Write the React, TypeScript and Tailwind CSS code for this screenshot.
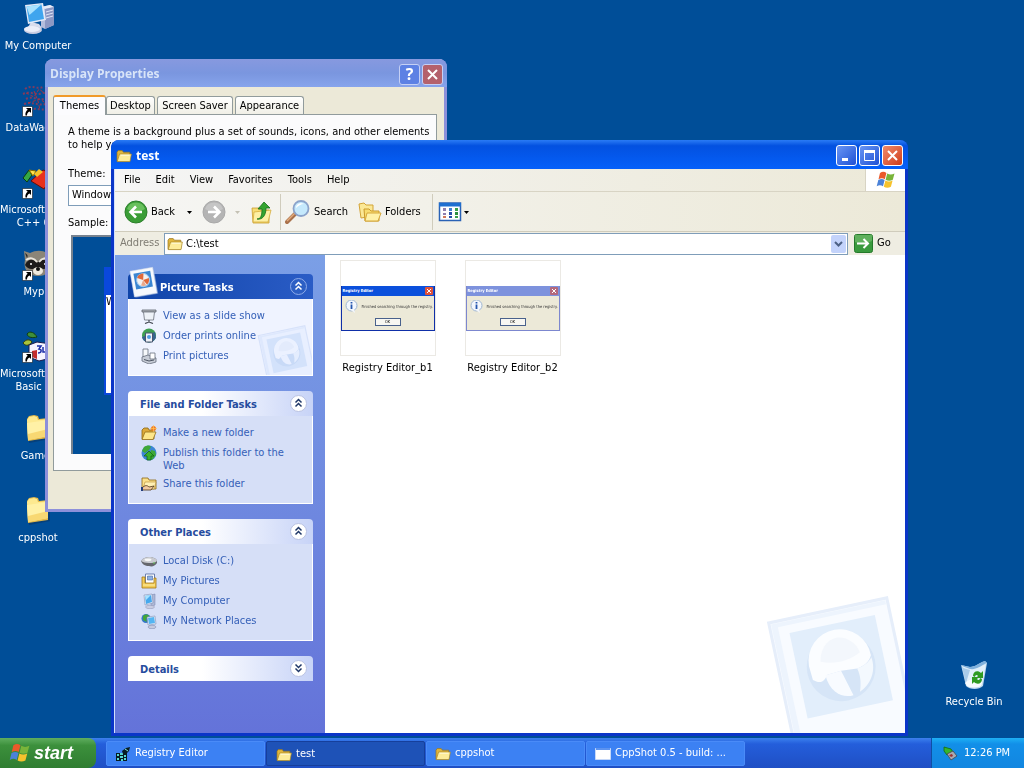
import React, { useState } from 'react';
import clsx from 'clsx';

type IconProps = { size?: number };

const FolderIcon = ({ size = 16 }: IconProps) => (
  <svg width={size} height={size} viewBox="0 0 16 16" className="shrink-0">
    <path d="M1 4.2 2.2 2.6h4l1.2 1.6h6.4v9H1z" fill="#e0b63c" stroke="#96731b" strokeWidth=".7" />
    <path d="M3.6 6h11.8l-1.4 7.6H1.2z" fill="#fdec9a" stroke="#a98628" strokeWidth=".7" />
    <path d="M4.6 7.2h9" stroke="#fffbdc" strokeWidth="1" />
  </svg>
);

const BigFolder = () => (
  <svg width="32" height="32" viewBox="0 0 32 32">
    <path d="M7 8 8 6l3-1 7 1 1 3 9 0v17l-21 4z" fill="#0a2f5c" opacity=".5" />
    <path d="M5 6 7 3l5-1 4 1 1 3 9-1v20L6 28z" fill="#e3b94a" />
    <path d="M5 7 7 4l5-1 3 1 1 3 10-1v17L6 27z" fill="#fde98f" />
    <path d="M5 10 26 7v15L6 26z" fill="#fff1a6" />
    <path d="M6 27 26 23v-7L6 21z" fill="#f8d873" />
  </svg>
);

const WindowsFlag = ({ size = 20 }: IconProps) => (
  <svg width={size} height={size} viewBox="0 0 20 20" className="shrink-0">
    <path d="M4 3c2.400-1.600 4.500-1.400 6.400 0L8.800 9.200c-2-1.300-3.900-1.200-6.300 0z" fill="#ea5a2a" />
    <path d="M11.200 3.500c2.200 1.400 4.800 1.300 7.300 0l-1.700 6.200c-2.300 1.300-5 1.300-7.200 0z" fill="#79b43a" />
    <path d="M2.300 10c2.400-1.300 4.300-1.300 6.300 0L7 16.300c-2-1.300-4-1.300-6.300 0z" fill="#4b82d8" />
    <path d="M9.400 10.500c2.200 1.300 4.900 1.300 7.200 0l-1.700 6.300c-2.300 1.300-4.900 1.300-7.100 0z" fill="#f6c22d" />
  </svg>
);

const ComputerIcon = ({ size = 32 }: IconProps) => (
  <svg width={size} height={size} viewBox="0 0 32 32" className="shrink-0">
    <path d="M19 4 28 2l4 2v18l-9 4-4-2z" fill="#b4bedd" />
    <path d="M19 4 28 2l4 2-9 2z" fill="#e8ecf8" />
    <path d="m23 6 9-2v18l-9 4z" fill="#8c98c4" />
    <path d="m24 9 7-2M24 12l7-2M24 15l7-2" stroke="#dfe5f7" />
    <path d="m9 19 8 2 3 4c-2 4-12 5-15 1z" fill="#d8dcec" />
    <ellipse cx="11" cy="27" rx="9" ry="4" fill="#c9cde2" />
    <ellipse cx="10" cy="26" rx="8" ry="3" fill="#eceef8" />
    <path d="M3 2 21 0l3 17-18 4z" fill="#e4eaf7" />
    <path d="m4.500 3.500 15-2 2.500 14.500L7 19z" fill="#3fa5ee" />
    <path d="m4.500 3.500 15-2L7.500 12z" fill="#a8e2ff" />
  </svg>
);

const SmallComputerIcon = () => (
  <svg width="16" height="16" viewBox="0 0 16 16">
    <path d="m10 2 4-1v11l-4 2z" fill="#aeb8d6" stroke="#7582ab" strokeWidth=".5" />
    <ellipse cx="9" cy="14" rx="4.500" ry="1.700" fill="#c9cde2" stroke="#8a91b3" strokeWidth=".5" />
    <path d="m3 2 8-1 1 9-8 2z" fill="#e3e9f4" stroke="#7182ad" strokeWidth=".5" />
    <path d="m4 3 6-1 1 7-6 2z" fill="#45a8ee" />
    <path d="m4 3 6-1-5 5z" fill="#a8e2ff" />
  </svg>
);

const ShortcutArrow = () => (
  <svg width="11" height="11" viewBox="0 0 11 11" className="absolute bottom-0 left-0">
    <path d="M.5.5h10v10H.5z" fill="#fff" stroke="#000" strokeWidth=".5" />
    <path d="M4 2h5v5L7.500 5.500C5.500 6.500 5 7.500 5 9.500H3.500C3 7 4 5 5.700 3.700z" fill="#000" />
  </svg>
);

const MapIcon = () => (
  <svg width="32" height="32" viewBox="0 0 32 32">
    <g fill="none" stroke="#7d3c60" strokeWidth="2" strokeDasharray="2 2">
      <path d="M3 4c7-5 12 1 18-2M1 9c8-4 14 3 22-2M4 14c8-4 12 3 20-1M2 19c9-3 13 2 22 0M8 25c6-3 10 1 17-1" />
    </g>
    <path d="m4 8 8 4 5-8 8 6M6 18l12-4 8 6M12 6l4 10 2 9" stroke="#a73340" fill="none" strokeDasharray="3 2" />
  </svg>
);

const VisualCppIcon = () => (
  <svg width="32" height="32" viewBox="0 0 32 32">
    <path d="m1 11 6-8 3 5-5 7z" fill="#35a845" stroke="#0b3b12" />
    <path d="m7 3 7 1-3 5z" fill="#ffe44b" stroke="#8a6b00" />
    <path d="m9 14 12-11 10 4-9 15z" fill="#e8301c" stroke="#6a0c05" />
    <path d="m12 7 5-5 4 3-6 5z" fill="#f7c42a" />
  </svg>
);

const RaccoonIcon = () => (
  <svg width="32" height="32" viewBox="0 0 32 32">
    <path d="m2 2 6 2c6-3 12-3 17 0l6-1-2 9c2 8-3 15-13 15S1 20 3 11z" fill="#8b8578" />
    <path d="M3 4c3 2 3 3 2 5zM28 4c-3 2-3 3-2 5z" fill="#2c2925" />
    <path d="M3 16c3-7 9-6 12-2 3-4 10-5 13 2-3 5-8 5-12 2-5 3-10 3-13-2z" fill="#1d1b1a" />
    <path d="M4 11c4-3 8-2 11 2M28 11c-4-3-8-2-11 2" stroke="#e9e5dc" strokeWidth="2" fill="none" />
    <ellipse cx="16" cy="22" rx="5" ry="4" fill="#efeade" />
    <circle cx="16" cy="20" r="2" fill="#111" />
    <circle cx="9" cy="15" r="1" fill="#fff" />
    <circle cx="23" cy="15" r="1" fill="#fff" />
  </svg>
);

const VisualBasicIcon = () => (
  <svg width="32" height="32" viewBox="0 0 32 32">
    <path d="M5 3c3-4 8-1 10 3-4 1-9 1-10-3z" fill="#3f8f3a" stroke="#123f10" />
    <path d="M1 12c3-4 7-4 9-1-2 3-6 5-9 1z" fill="#a9c33d" stroke="#33400c" />
    <path d="m7 14 8-3 14 2v14l-12 3-10-4z" fill="#f6f4ff" stroke="#1a1a4c" />
    <path d="m10 20 5-1v9l-5-2z" fill="#c42d2d" />
    <path d="M15 15h4l-2 3c3 0 3 4-1 4M21 16v5h4" stroke="#1c2ea8" strokeWidth="1.500" fill="none" />
  </svg>
);

const RecycleBinIcon = () => (
  <svg width="32" height="32" viewBox="0 0 32 32">
    <path d="m3 6 9 2c5 0 9-4 15-6l2 2-4 23c-4 4-13 4-17 0z" fill="#b9d6ee" />
    <path d="m3 6 9 2c5 0 9-4 15-6l2 2c-5 1-8 7-14 7-5 0-9-2-12-5z" fill="#7fb0dc" />
    <path d="m4 7 8 3c6 1 10-3 16-5l-4 21c-4 3-12 3-15 0z" fill="#e6f2fb" opacity=".9" />
    <path d="M4 8c3 2 6 2 8 3l-4 13z" fill="#a9cbe9" />
    <path d="M7 24c4-5 12-4 17-1l-1 4c-4 2-11 2-14 0z" fill="#f6fbff" />
    <path d="M15 17c0-5 5-6 8-3l2-2v7h-7l2-2c-1-2-3-1-3 1zM24 20c0 5-5 6-8 3l-2 2v-7h7l-2 2c1 2 3 1 3-1z" fill="#2f9b22" />
  </svg>
);

const DiskIcon = () => (
  <svg width="16" height="16" viewBox="0 0 16 16">
    <path d="M0 8c2-3 5-4 8-4 4 0 8 2 8 4v2c-2 3-5 4-8 3-4 0-7-2-8-5z" fill="#65676d" />
    <path d="M0 8c2-3 5-4 8-4 4 0 8 2 8 4-2 2-5 2-8 2-4 0-6-1-8-2z" fill="#c9cbd0" />
    <ellipse cx="7" cy="6.800" rx="3.500" ry="1.400" fill="#f7f7f7" />
    <circle cx="13" cy="10" r=".7" fill="#5be04a" />
  </svg>
);

const MyPicturesIcon = () => (
  <svg width="16" height="16" viewBox="0 0 16 16">
    <path d="M4.500 1h9v10h-9z" fill="#fff" stroke="#6b7fae" />
    <path d="M6.500 3h5v4h-5z" fill="#8fb3e4" stroke="#35538f" strokeWidth=".5" />
    <path d="M1 4h3v6h9V5h2v10H1z" fill="#f3cc57" stroke="#a27616" strokeWidth=".8" />
    <path d="M2 12h12" stroke="#fff0a8" />
  </svg>
);

const GlobeIcon = () => (
  <svg width="16" height="16" viewBox="0 0 16 16">
    <circle cx="8" cy="8" r="7.500" fill="#3c86d4" />
    <path d="M3 2c3-2 6-2 7 0L8 5 4 8 1 6zM10 5l4 1 1 4-4 5-3-4z" fill="#3fa838" />
    <path d="m8 6 5 5h-3v4H6v-4H3z" fill="#38b02c" stroke="#12600e" strokeWidth=".7" />
  </svg>
);

const NetworkIcon = () => (
  <svg width="16" height="16" viewBox="0 0 16 16">
    <circle cx="5" cy="5.500" r="4.500" fill="#3678c9" />
    <path d="M2 3c2-2 5-2 6 0L5 6l1 3-4-2z" fill="#42a53a" />
    <path d="m6 4 8-1 1 8-8 1z" fill="#e3e9f4" stroke="#7182ad" strokeWidth=".5" />
    <path d="m7 5 6-1 1 6-6 1z" fill="#54b5f2" />
    <ellipse cx="11" cy="14" rx="4" ry="1.700" fill="#c6cbdf" stroke="#7582ab" strokeWidth=".5" />
  </svg>
);

const SlideShowIcon = () => (
  <svg width="16" height="16" viewBox="0 0 16 16">
    <path d="M1 2h14v2H1z" fill="#b9bdc4" stroke="#5c616b" strokeWidth=".8" />
    <path d="M2.500 4h11l-1 8h-9z" fill="#eef2f8" stroke="#6c717c" strokeWidth=".8" />
    <path d="M8 12v2M4 15.500l4-1.500 4 1.500" stroke="#4c515b" strokeWidth="1.300" fill="none" />
  </svg>
);

const OrderPrintsIcon = () => (
  <svg width="16" height="16" viewBox="0 0 16 16">
    <circle cx="8" cy="7.500" r="7" fill="#3f9f52" />
    <path d="M1 9c1 6 10 8 14 1l-1-6z" fill="#36658f" />
    <path d="M4.500 5h7v9h-7z" fill="#eef1f6" stroke="#4b5670" />
    <circle cx="8" cy="9" r="2" fill="#4d9be0" />
  </svg>
);

const PrinterIcon = () => (
  <svg width="16" height="16" viewBox="0 0 16 16">
    <path d="M2 1h5v8H2z" fill="#f6f8fb" stroke="#68707f" strokeWidth=".8" />
    <path d="m1 9 6-2 8 3v4l-7 2-7-3z" fill="#c7ccd6" stroke="#68707f" strokeWidth=".8" />
    <path d="M9 5h5v6H9z" fill="#fff" stroke="#68707f" strokeWidth=".8" />
    <path d="M3 11.500 8 13l5-1" stroke="#4e5664" fill="none" />
  </svg>
);

const NewFolderIcon = () => (
  <svg width="16" height="16" viewBox="0 0 16 16">
    <path d="M1 5 3 3h4l1 2h5v9H1z" fill="#dca93a" stroke="#8c6411" strokeWidth=".8" />
    <path d="M4 7h11l-3 7.500H1z" fill="#fde68a" stroke="#95701b" strokeWidth=".8" />
    <circle cx="12.500" cy="3.500" r="2.500" fill="#f07c23" />
    <path d="M12.500 0v7M9 3.500h7" stroke="#ffc35b" strokeWidth=".7" />
  </svg>
);

const ShareFolderIcon = () => (
  <svg width="16" height="16" viewBox="0 0 16 16">
    <path d="M1 2h6l1 2h7v9H1z" fill="#fbe08a" stroke="#8c6411" strokeWidth=".8" />
    <path d="M4 6h11l-2 7H2z" fill="#fff0b4" stroke="#a67b20" strokeWidth=".5" />
    <path d="M1 12c3-3 5-3 7-1l5-1-3 4H1z" fill="#f1c9a0" stroke="#4d3414" strokeWidth=".8" />
    <path d="M1 11v4" stroke="#243c7a" strokeWidth="2" />
  </svg>
);

const RegistryIcon = () => (
  <svg width="16" height="16" viewBox="0 0 16 16" className="shrink-0">
    <path d="M1 7h11v8H1z" fill="#071d22" />
    <path d="M2 8h2v2H2zM5 7h3v2H5zM9 9h2v2H9zM2 12h2v2H2zM5 10h3v2H5zM6 13h2v2H6zM9 12h2v2H9z" fill="#56d6d2" />
    <path d="m7 5 4-3 4-1-1 4-4 4-2-1z" fill="#081f24" />
    <path d="m10 3 3 2" stroke="#7fe7e2" />
  </svg>
);

const TrayIcon = () => (
  <svg width="16" height="16" viewBox="0 0 16 16">
    <path d="m2 2 7 2 2 3-6 3-3-4z" fill="#35b52c" stroke="#14690f" strokeWidth=".8" />
    <path d="m5 9 6-3 4 5-6 4z" fill="#a9abb2" stroke="#44464d" strokeWidth=".8" />
    <path d="m7 10 3-1 1 2-2 1z" fill="#9c2f2f" />
  </svg>
);

const RoundArrow = ({ forward = false }: { forward?: boolean }) => (
  <svg width="24" height="24" viewBox="0 0 24 24" className="shrink-0">
    <circle cx="12" cy="12" r="11" fill={forward ? '#b4b4b4' : '#3a9d36'} stroke={forward ? '#a9a9a9' : '#2c7f2b'} />
    <path d="M3 9a9.500 9.500 0 0 1 18 0c-5 3-13 3-18 0z" fill={forward ? '#cccccc' : '#7cce6c'} opacity=".7" />
    <path
      d={forward ? 'M6 12h11M12 6.500l5.500 5.500-5.500 5.500' : 'M18 12H7M12 6.500 6.500 12l5.500 5.500'}
      stroke="#fff"
      strokeWidth="2.600"
      fill="none"
    />
  </svg>
);

const UpFolderIcon = () => (
  <svg width="24" height="24" viewBox="0 0 24 24">
    <path d="M3 8h7l1 2h9v13H4z" fill="#f7dd74" stroke="#c99d2d" strokeWidth=".8" />
    <path d="M5 12 22 10l-3 12H4z" fill="#fdf0a4" stroke="#d5ac3c" strokeWidth=".8" />
    <path d="M8 19c4 0 5-4 5-10H9l6-7 6 6h-4c0 8-4 12-9 11z" fill="#34a42f" stroke="#14701a" strokeWidth=".8" />
  </svg>
);

const SearchIcon = () => (
  <svg width="26" height="26" viewBox="0 0 26 26">
    <path d="m2 23 9-9" stroke="#a9714b" strokeWidth="4" strokeLinecap="round" />
    <path d="m2 22 8-8" stroke="#e3ab7d" strokeWidth="1.500" />
    <circle cx="16" cy="9.500" r="7.500" fill="#c5e9fc" stroke="#8ba3ca" strokeWidth="1.800" />
    <path d="M11 9c0-4 5-6 8-4-3 0-6 2-8 4z" fill="#fff" />
  </svg>
);

const FoldersIcon = () => (
  <svg width="24" height="24" viewBox="0 0 24 24">
    <path d="M1 4 6 3l2 2h7v11L3 18z" fill="#fbe896" stroke="#d3a437" />
    <path d="M6 9h5l2 2h8v10H7z" fill="#f8dc70" stroke="#cb9a2c" />
    <path d="M9 13h14l-3 8H7z" fill="#fff1a8" stroke="#d6a83a" />
  </svg>
);

const ViewsIcon = () => (
  <svg width="24" height="20" viewBox="0 0 24 20">
    <path d="M1.500 1h21v17.500h-21z" fill="#fff" stroke="#2a62b5" strokeWidth="1.500" />
    <path d="M1 1h22v3.500H1z" fill="#1e6fd0" />
    <path d="M5 6h3v3H5zM5 11h3v2H5z" fill="#8f7fae" />
    <path d="M5 14h3v2H5z" fill="#d07a5c" />
    <path d="M11 6h3v3h-3z" fill="#3f7fd0" />
    <path d="M11 10h3v3h-3zM11 14h3v2h-3z" fill="#274fa8" />
    <path d="M17 6h3v3h-3zM17 14h3v2h-3z" fill="#3aa04a" />
    <path d="M17 10h3v3h-3z" fill="#2b8f3f" />
  </svg>
);

const DownTriangle = ({ muted = false }: { muted?: boolean }) => (
  <svg width="5" height="3" viewBox="0 0 5 3" className="shrink-0">
    <path d="M0 0h5L2.500 3z" fill={muted ? '#c4c1b4' : '#000'} />
  </svg>
);

// tilted snapshot with a beach ball, used by the picture tasks header
const Snapshot = () => (
  <svg width="30" height="32" viewBox="0 0 30 32">
    <g transform="rotate(-10 15 16)">
      <path d="M4 4h23v26H4z" fill="#8ea6d6" opacity=".6" />
      <path d="M3 3h23v26H3z" fill="#f7f9fd" stroke="#cfd9ea" strokeWidth=".5" />
      <path d="M6 6h17v16H6z" fill="#3b86d2" />
      <circle cx="14.500" cy="14" r="6.500" fill="#f3f1f1" stroke="#9cc6ee" />
      <path d="M14.500 14 9 11c1-3 4-4 7-3.500zM14.500 14l6-1c0 3-1 5-3 6z" fill="#e0683a" />
      <path d="m14.500 14-3 5c2 1 4 1 5 .5z" fill="#e9a98c" />
    </g>
  </svg>
);

const SnapshotWatermark = ({ size }: { size: number }) => (
  <svg width={size} height={size} viewBox="0 0 140 140">
    <g transform="rotate(-12 70 70) translate(1 7)">
      <path d="M14 12h119v140H14z" fill="#f8fbff" stroke="#e6eefa" strokeWidth="3" />
      <path d="M16 14h115v4H22v130h-6z" fill="#edf4fd" />
      <path d="M32 26h86v86H32z" fill="#e2eefb" />
      <circle cx="75" cy="69" r="34" fill="#d6e5f7" />
      <path d="M44 62a31 31 0 0 1 62 2c-3 6-9 9-16 10l-16-1-14 1c-6 8-10 6-15 2z" fill="#fbfdff" />
      <path d="M58 74l16-1 7 26c-10 1-22-6-23-25z" fill="#f8fbff" />
      <path d="M90 74c7-1 13-4 16-8 2 14-6 26-18 31 3-8 4-16 2-23z" fill="#f4f9fe" />
      <path d="M56 60c2-11 10-20 20-20 11 1 18 9 20 19-12 6-27 7-40 1z" fill="#f3f7fc" />
    </g>
  </svg>
);

const desktopIcons = [
  { label: 'My Computer', icon: <ComputerIcon /> },
  { label: 'DataWackers', icon: <MapIcon />, shortcut: true },
  { label: 'Microsoft Visual\nC++ 6.0', icon: <VisualCppIcon />, shortcut: true },
  { label: 'Mypic', icon: <RaccoonIcon />, shortcut: true },
  { label: 'Microsoft Visual\nBasic 6.0', icon: <VisualBasicIcon />, shortcut: true },
  { label: 'Games', icon: <BigFolder /> },
  { label: 'cppshot', icon: <BigFolder /> },
];

function DesktopIcon({ label, icon, shortcut }: { label: string; icon: React.ReactNode; shortcut?: boolean }) {
  return (
    <button className="flex h-[82px] w-[76px] flex-col items-center gap-1 pt-[3px] text-white">
      <span className="relative">
        {icon}
        {shortcut && <ShortcutArrow />}
      </span>
      <span className="max-w-full text-center leading-[13px] whitespace-pre">{label}</span>
    </button>
  );
}

function DisplayProperties() {
  const [theme, setTheme] = useState('Windows XP');
  const tabs = ['Desktop', 'Screen Saver', 'Appearance'];

  return (
    <section className="absolute top-[59px] left-[45px] flex h-[453px] w-[402px] flex-col rounded-t-lg border-x-3 border-b-3 border-[#8d90da] bg-[#ece9d8]">
      <header className="-mx-[3px] flex h-7 shrink-0 items-center justify-between rounded-t-lg bg-linear-to-b from-[#8799df] via-[#7a96df] to-[#87a4ec] pt-0.5 pr-1 pl-[5px]">
        <h2 className="font-['Open_Sans',sans-serif] text-[12px] font-bold text-[#d8e4f8]">Display Properties</h2>
        <div className="flex gap-0.5">
          <button aria-label="Help" className="flex size-[21px] items-center justify-center rounded-[3px] border border-[#c5d0f5] bg-[#5d81e4] font-['Open_Sans',sans-serif] text-base font-bold text-white">
            ?
          </button>
          <button aria-label="Close" className="flex size-[21px] items-center justify-center rounded-[3px] border border-[#c5d0f5] bg-[#b4616c]">
            <svg width="13" height="13" viewBox="0 0 13 13">
              <path d="m2 2 9 9M11 2l-9 9" stroke="#fff" strokeWidth="2" />
            </svg>
          </button>
        </div>
      </header>

      <div className="flex flex-1 flex-col pt-2 pr-[7px] pb-[38px] pl-[5px]">
        <div role="tablist" className="flex items-end">
          <button role="tab" aria-selected="true" className="relative -mb-px h-5 w-[53px] rounded-t-[3px] border border-t-2 border-b-0 border-[#919b9c] border-t-[#f09a2a] bg-[#fcfcfe]">
            Themes
          </button>
          {tabs.map((tab, i) => (
            <button
              key={tab}
              role="tab"
              aria-selected="false"
              className={clsx(
                'mr-0.5 h-[18px] rounded-t-[3px] border border-b-0 border-[#919b9c] bg-linear-to-b from-white to-[#f0efe6] pt-px',
                i === 0 && 'w-[49px]',
                i === 1 && 'w-[76px]',
                i === 2 && 'w-[69px]',
              )}
            >
              {tab}
            </button>
          ))}
        </div>
        <div className="flex flex-1 flex-col border border-[#919b9c] bg-[#fbfbfc] px-3.5 pt-2.5 pb-4">
          <p className="leading-[13px] whitespace-nowrap">
            A theme is a background plus a set of sounds, icons, and other elements
            <br />
            to help you
          </p>
          <label htmlFor="theme" className="mt-4 leading-[13px]">Theme:</label>
          <select
            id="theme"
            value={theme}
            onChange={(e) => setTheme(e.target.value)}
            className="mt-[5px] h-[21px] w-[220px] appearance-none border border-[#7f9db9] bg-white px-[3px]"
          >
            <option>Windows XP</option>
            <option>Windows Classic</option>
          </select>
          <span className="mt-2.5 leading-[13px]">Sample:</span>
          <div className="mt-1.5 ml-[3px] flex-1 border-t-2 border-l-2 border-[#77828f] bg-[#004e98] pt-[30px] pl-[31px]">
            <div className="h-[128px] w-[200px] border-2 border-t-[28px] border-[#0a48dc] bg-white leading-[13px]">
              Window Text
            </div>
          </div>
        </div>
      </div>
    </section>
  );
}

function Chevrons({ down = false, dark = false }: { down?: boolean; dark?: boolean }) {
  return (
    <svg width="19" height="19" viewBox="0 0 19 19">
      <circle cx="9.500" cy="9.500" r="8" fill={dark ? '#2d5fc4' : '#fff'} stroke={dark ? '#8eabea' : '#b9c2e2'} />
      <path
        d={down ? 'm6.500 5.500 3 3 3-3M6.500 9.500l3 3 3-3' : 'm6.500 8.500 3-3 3 3M6.500 12.500l3-3 3 3'}
        fill="none"
        stroke={dark ? '#fff' : '#1f3767'}
        strokeWidth="1.500"
      />
    </svg>
  );
}

type Task = { label: string; icon: React.ReactNode };

function TaskCard({ title, tasks, primary = false }: { title: string; tasks?: Task[]; primary?: boolean }) {
  return (
    <section className="relative">
      {primary && (
        <div className="absolute -top-[8px] left-px">
          <Snapshot />
        </div>
      )}
      <header
        className={clsx(
          'flex h-[25px] items-center justify-between rounded-t-[4px] pr-[5px] font-bold',
          primary
            ? 'bg-linear-to-r from-[#0f44a8] to-[#2a5cc6] pl-8 text-white'
            : 'bg-linear-to-r from-white from-40% to-[#c7d3f7] pl-3 text-[#264c9e]',
        )}
      >
        <h3 className="pt-[3px]">{title}</h3>
        <button aria-label={`Toggle ${title}`}>
          <Chevrons down={!tasks} dark={primary} />
        </button>
      </header>
      {tasks && (
        <ul
          className={clsx(
            'relative flex flex-col gap-1 overflow-hidden border border-t-0 border-white px-3 pt-[9px] pb-[11px]',
            primary ? 'bg-[#eff3ff]' : 'bg-[#d6dff7]',
          )}
        >
          {primary && (
            <li aria-hidden="true" className="absolute right-0 -bottom-1 mix-blend-multiply">
              <SnapshotWatermark size={56} />
            </li>
          )}
          {tasks.map((task) => (
            <li key={task.label} className="relative flex items-start gap-1.5">
              <span className="size-4 shrink-0">{task.icon}</span>
              <a href="#" className="mt-px leading-[13px] text-[#3560b8]">{task.label}</a>
            </li>
          ))}
        </ul>
      )}
    </section>
  );
}

const pictureTasks: Task[] = [
  { label: 'View as a slide show', icon: <SlideShowIcon /> },
  { label: 'Order prints online', icon: <OrderPrintsIcon /> },
  { label: 'Print pictures', icon: <PrinterIcon /> },
];

const folderTasks: Task[] = [
  { label: 'Make a new folder', icon: <NewFolderIcon /> },
  { label: 'Publish this folder to the Web', icon: <GlobeIcon /> },
  { label: 'Share this folder', icon: <ShareFolderIcon /> },
];

const otherPlaces: Task[] = [
  { label: 'Local Disk (C:)', icon: <DiskIcon /> },
  { label: 'My Pictures', icon: <MyPicturesIcon /> },
  { label: 'My Computer', icon: <SmallComputerIcon /> },
  { label: 'My Network Places', icon: <NetworkIcon /> },
];

function Thumbnail({ name, inactive = false }: { name: string; inactive?: boolean }) {
  return (
    <figure className="flex w-[125px] flex-col items-center">
      <div className="flex size-24 items-center border border-[#ebe9e4] bg-white">
        <div
          className={clsx(
            'flex h-[45px] w-full flex-col border-x border-b bg-[#ece9d8] text-[4px]',
            inactive ? 'border-[#7c87cf]' : 'border-[#0f2fa8]',
          )}
        >
          <div className={clsx('flex h-[10px] items-center justify-between px-px font-bold text-white', inactive ? 'bg-[#7d92dd]' : 'bg-[#0b50dc]')}>
            <span>Registry Editor</span>
            <span className={clsx('flex size-2 items-center justify-center rounded-[1px]', inactive ? 'bg-[#b4697c]' : 'bg-[#e0523a]')}>
              <svg width="6" height="6" viewBox="0 0 6 6">
                <path d="m1 1 4 4M5 1 1 5" stroke="#fff" />
              </svg>
            </span>
          </div>
          <div className="flex flex-1 items-center gap-1 pl-[3px] whitespace-nowrap">
            <svg width="13" height="13" viewBox="0 0 13 13" className="shrink-0">
              <circle cx="6.500" cy="5.500" r="5.500" fill="#f3f7fd" stroke="#9fb6d2" />
              <path d="m6 10 4 3-1-4z" fill="#f3f7fd" />
              <path d="M6.500 4.500v4.500M6.500 2v1.500" stroke="#2456ae" strokeWidth="1.800" />
            </svg>
            <span className="text-[#333]">Finished searching through the registry.</span>
          </div>
          <div className="mx-auto mb-1 flex h-2 w-[26px] items-center justify-center border border-[#49618c] bg-[#f8f7f2]">OK</div>
        </div>
      </div>
      <figcaption className="mt-[5px] leading-[13px]">{name}</figcaption>
    </figure>
  );
}

function WindowButton({ label, close, children }: { label: string; close?: boolean; children: React.ReactNode }) {
  return (
    <button
      aria-label={label}
      className={clsx(
        'flex size-[21px] items-center justify-center rounded-[3px] border border-white bg-linear-to-br',
        close ? 'from-[#f0896a] to-[#cf3a14]' : 'from-[#6a95f4] to-[#1f50d4]',
      )}
    >
      <svg width="15" height="15" viewBox="0 0 15 15" fill="none" stroke="#fff">
        {children}
      </svg>
    </button>
  );
}

function ExplorerWindow() {
  const [address, setAddress] = useState('C:\\test');
  const menus = ['File', 'Edit', 'View', 'Favorites', 'Tools', 'Help'];

  return (
    <section className="absolute top-[140px] right-[116px] bottom-[2px] left-[111px] flex flex-col rounded-t-lg bg-[#0a35c8] px-[3px] pb-[3px]">
      <header className="-mx-[3px] flex h-[29px] shrink-0 items-center gap-1 rounded-t-lg bg-linear-to-b from-[#2a7bf5] via-[#0351e0] via-20% to-[#0560fa] pt-0.5 pr-[5px] pl-[5px]">
        <FolderIcon />
        <h1 className="flex-1 font-['Open_Sans',sans-serif] text-[12px] font-bold text-white">test</h1>
        <div className="flex gap-0.5">
          <WindowButton label="Minimize">
            <path d="M3 11.500h6" strokeWidth="3" />
          </WindowButton>
          <WindowButton label="Maximize">
            <path d="M2.500 3.500h10v9h-10z" />
            <path d="M2 3.500h11" strokeWidth="3" />
          </WindowButton>
          <WindowButton label="Close" close>
            <path d="m3 3 9 9M12 3l-9 9" strokeWidth="2" />
          </WindowButton>
        </div>
      </header>

      <div className="flex min-h-0 flex-1 flex-col border-l border-[#d3e0fb] bg-[#efede2]">
        <nav className="flex h-[23px] shrink-0 items-center border-b border-[#d8d4c4] bg-linear-to-r from-[#f5f5f5] to-[#ece9d8]">
          <div className="flex flex-1 gap-[15px] pl-[9px]">
            {menus.map((menu) => (
              <button key={menu}>{menu}</button>
            ))}
          </div>
          <div className="flex h-full w-10 items-center justify-center border-l border-[#d8d4c4] bg-white">
            <WindowsFlag size={20} />
          </div>
        </nav>

        <div className="flex h-10 shrink-0 items-center border-b border-[#d0ccbc] bg-linear-to-r from-[#f6f6f4] to-[#ece9d8] pt-px pl-[9px]">
          <button className="flex w-[53px] items-center gap-[3px]">
            <RoundArrow />
            Back
          </button>
          <button aria-label="Back history" className="flex w-[25px] justify-center">
            <DownTriangle />
          </button>
          <button aria-label="Forward" className="w-6"><RoundArrow forward /></button>
          <button aria-label="Forward history" className="flex w-[23px] justify-center">
            <DownTriangle muted />
          </button>
          <button aria-label="Up" className="w-[31px]"><UpFolderIcon /></button>
          <div className="h-9 w-px bg-[#d0ccbc]" />
          <button className="flex w-[77px] items-center gap-[3px] pl-1">
            <SearchIcon />
            Search
          </button>
          <button className="flex w-[74px] items-center gap-[3px]">
            <FoldersIcon />
            Folders
          </button>
          <div className="h-9 w-px bg-[#d0ccbc]" />
          <button aria-label="Views" className="flex items-center gap-0.5 pl-[5px]">
            <ViewsIcon />
            <DownTriangle />
          </button>
        </div>

        <form className="flex h-[23px] shrink-0 items-center pl-[5px]" onSubmit={(e) => e.preventDefault()}>
          <label htmlFor="address" className="w-11 text-[#7f7c73]">Address</label>
          <div className="flex h-[22px] flex-1 items-center gap-[3px] border border-[#7f9db9] bg-white pr-px pl-0.5">
            <FolderIcon />
            <input
              id="address"
              value={address}
              onChange={(e) => setAddress(e.target.value)}
              className="min-w-0 flex-1 pt-px outline-none"
            />
            <button type="button" aria-label="Address history" className="flex h-[18px] w-[15px] items-center justify-center rounded-[2px] bg-[#c3d3fb]">
              <svg width="9" height="6" viewBox="0 0 9 6">
                <path d="m1 1 3.500 3.500L8 1" stroke="#4d6185" strokeWidth="2" fill="none" />
              </svg>
            </button>
          </div>
          <button className="flex w-[57px] items-center gap-1 pl-1.5">
            <svg width="19" height="19" viewBox="0 0 19 19">
              <rect x=".5" y=".5" width="18" height="18" rx="2" fill="#3a9a3e" stroke="#257a2b" />
              <path d="M1 1h17v6C12 10 6 10 1 8z" fill="#78bf73" opacity=".6" />
              <path d="M3 9.500h11M9.500 5l4.500 4.500L9.500 14" stroke="#fff" strokeWidth="2" fill="none" />
            </svg>
            Go
          </button>
        </form>

        <div className="flex min-h-0 flex-1">
          <aside className="flex w-[210px] shrink-0 flex-col gap-[15px] overflow-hidden bg-linear-to-b from-[#7b9fe6] to-[#6473d9] pt-[19px] pr-3 pl-[13px]">
            <TaskCard title="Picture Tasks" tasks={pictureTasks} primary />
            <TaskCard title="File and Folder Tasks" tasks={folderTasks} />
            <TaskCard title="Other Places" tasks={otherPlaces} />
            <TaskCard title="Details" />
          </aside>
          <main className="relative flex flex-1 items-start overflow-hidden bg-white pt-[5px]">
            <Thumbnail name="Registry Editor_b1" />
            <Thumbnail name="Registry Editor_b2" inactive />
            <div aria-hidden="true" className="absolute right-0 bottom-0">
              <SnapshotWatermark size={142} />
            </div>
          </main>
        </div>
      </div>
    </section>
  );
}

const openWindows = [
  { title: 'Registry Editor', icon: <RegistryIcon /> },
  { title: 'test', icon: <FolderIcon />, active: true },
  { title: 'cppshot', icon: <FolderIcon /> },
  {
    title: 'CppShot 0.5 - build: ...',
    icon: (
      <svg width="16" height="16" viewBox="0 0 16 16" className="shrink-0">
        <path d="M.5 2.500h15v11H.5z" fill="#fff" stroke="#c6d8f8" />
        <path d="M1 2h14v2H1z" fill="#5c93f0" />
      </svg>
    ),
  },
];

function Taskbar() {
  return (
    <footer className="flex h-[30px] shrink-0 bg-linear-to-b from-[#3c80ee] via-[#245edb] via-20% to-[#1f4fc4] text-white">
      <button className="flex w-24 items-center gap-[3px] rounded-r-lg bg-linear-to-b from-[#5fae5f] via-[#3c903c] via-25% to-[#2f7d31] pl-[9px] font-['Liberation_Sans',sans-serif] text-lg font-bold italic text-white">
        <WindowsFlag size={22} />
        start
      </button>
      <div className="flex flex-1 gap-px pt-[3px] pb-0.5 pl-2.5">
        {openWindows.map((win) => (
          <button
            key={win.title}
            className={clsx(
              'flex w-[159px] items-center gap-1 rounded-[2px] border pl-2 text-left',
              win.active ? 'border-[#163f9b] bg-[#1e52b7] pt-0.5 pl-[9px]' : 'border-[#4a8bf8] bg-[#3c81f3]',
            )}
          >
            {win.icon}
            {win.title}
          </button>
        ))}
      </div>
      <div className="flex w-[93px] items-center gap-1.5 border-l border-[#0f4fa5] bg-linear-to-b from-[#1fb0f5] via-[#128fe8] via-20% to-[#1286e0] pl-2.5">
        <TrayIcon />
        <time>12:26 PM</time>
      </div>
    </footer>
  );
}

export default function App() {
  return (
    <div className="flex h-screen flex-col overflow-hidden bg-[#004e98] font-['DejaVu_Sans_Condensed','Noto_Sans',sans-serif] text-[11px] text-black">
      <div className="relative min-h-0 flex-1">
        <div className="flex flex-col">
          {desktopIcons.map((item) => (
            <DesktopIcon key={item.label} {...item} />
          ))}
        </div>
        <div className="absolute right-3 bottom-0">
          <DesktopIcon label="Recycle Bin" icon={<RecycleBinIcon />} />
        </div>
        <DisplayProperties />
        <ExplorerWindow />
      </div>
      <Taskbar />
    </div>
  );
}
